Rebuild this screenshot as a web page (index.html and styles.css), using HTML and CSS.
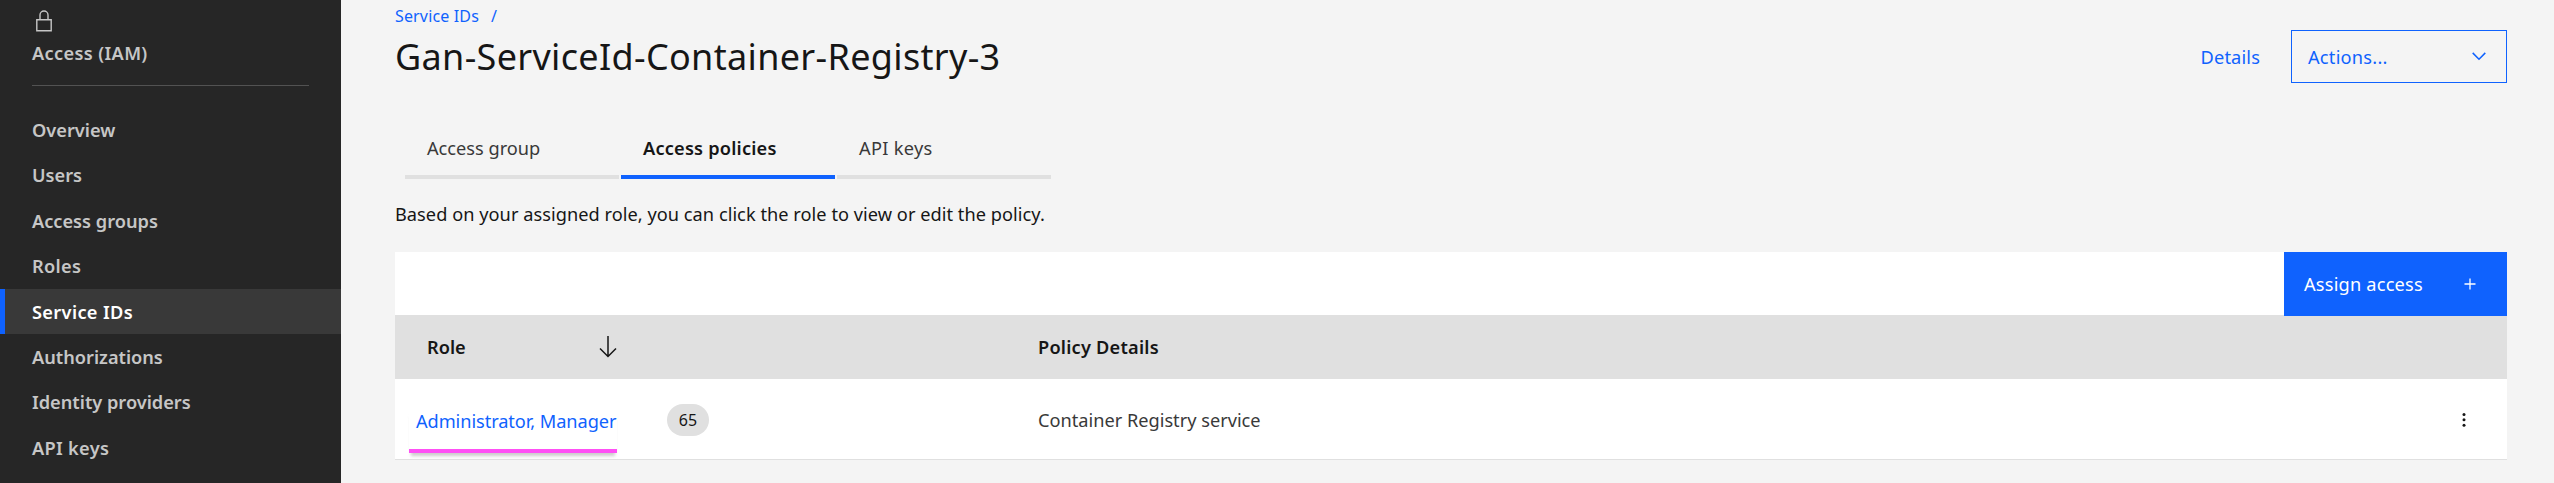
FILE: index.html
```html
<!DOCTYPE html>
<html lang="en">
<head>
<meta charset="utf-8">
<title>Service IDs</title>
<link rel="stylesheet" href="styles.css">
</head>
<body>
<div class="app">
  <aside class="sidebar">
    <div class="sidebar-head">
      <svg class="lock" width="16" height="22" viewBox="0 0 16 22"><path d="M.8 9.800h14.400v11H.8zM4 9.800V5a4 4 0 0 1 8 0v4.800" fill="none" stroke="currentColor" stroke-width="1.400"/></svg>
      <div class="sidebar-title">Access (IAM)</div>
    </div>
    <nav class="nav">
      <a class="nav-item">Overview</a>
      <a class="nav-item">Users</a>
      <a class="nav-item">Access groups</a>
      <a class="nav-item loose">Roles</a>
      <a class="nav-item active">Service IDs</a>
      <a class="nav-item">Authorizations</a>
      <a class="nav-item">Identity providers</a>
      <a class="nav-item loose">API keys</a>
    </nav>
  </aside>
  <main class="main">
    <header class="header">
      <div>
        <div class="breadcrumb"><a>Service IDs</a><span>/</span></div>
        <h1 class="title">Gan-ServiceId-Container-Registry-3</h1>
      </div>
      <div class="header-actions">
        <a class="details">Details</a>
        <button class="actions"><span>Actions...</span><svg width="14" height="9" viewBox="0 0 14 9"><path d="M.7.900 7 7.300 13.300.900" fill="none" stroke="currentColor" stroke-width="1.500"/></svg></button>
      </div>
    </header>
    <div class="tabs">
      <div class="tab">Access group</div>
      <div class="tab selected">Access policies</div>
      <div class="tab loose">API keys</div>
    </div>
    <p class="description">Based on your assigned role, you can click the role to view or edit the policy.</p>
    <section class="table">
      <div class="toolbar">
        <button class="assign"><span>Assign access</span><svg width="12" height="12" viewBox="0 0 12 12"><path d="M6 .5v11M.5 6h11" stroke="currentColor" stroke-width="1.300"/></svg></button>
      </div>
      <div class="row head">
        <div class="role-head"><span>Role</span><svg width="18" height="22" viewBox="0 0 18 22"><path d="M9 0v20M1 12.500l8 8 8-8" fill="none" stroke="currentColor" stroke-width="1.500"/></svg></div>
        <div class="policy-head">Policy Details</div>
      </div>
      <div class="row body">
        <div class="role-cell"><a class="role-link">Administrator, Manager</a><span class="badge">65</span></div>
        <div class="policy-cell">Container Registry service</div>
        <svg class="menu" width="4" height="16" viewBox="0 0 4 16"><circle cx="2" cy="2.500" r="1.500"/><circle cx="2" cy="7.800" r="1.500"/><circle cx="2" cy="13.200" r="1.500"/></svg>
      </div>
    </section>
  </main>
</div>
</body>
</html>
```
FILE: styles.css
```css
* { box-sizing: border-box; }
body {
  margin: 0;
  background: #f4f4f4;
  color: #161616;
  font: 18.200px/24px "Noto Sans", sans-serif;
}
button { font: inherit; border: 0; border-radius: 0; }
svg { display: block; flex: none; }
.app { display: flex; height: 483px; overflow: hidden; white-space: nowrap; }
.loose { letter-spacing: .3px; }

.sidebar { width: 341px; flex: none; background: #262626; color: #c6c6c6; font-weight: 600; }
.sidebar-head { height: 86px; margin: 0 32px; padding-top: 10px; border-bottom: 1px solid #525252; }
.lock { margin-left: 4px; }
.sidebar-title { margin-top: 9px; letter-spacing: .35px; }
.nav { padding-top: 21.400px; }
.nav-item { display: flex; align-items: center; height: 45.400px; padding-left: 32px; }
.nav-item.active { background: #393939; color: #fff; box-shadow: inset 5px 0 #0f62fe; letter-spacing: .35px; }

.main { flex: 1; padding: 0 47px 0 54px; }
.header { display: flex; justify-content: space-between; height: 137px; }
.breadcrumb { display: flex; gap: 12px; padding-top: 4px; color: #0f62fe; font-size: 16px; letter-spacing: .15px; }
.title { margin: 5px 0 0; font-size: 36px; line-height: 48px; font-weight: 400; letter-spacing: .33px; }
.header-actions { display: flex; align-items: center; gap: 31px; height: 53px; margin-top: 30px; color: #0f62fe; }
.details { letter-spacing: .15px; }
.actions { display: flex; align-items: center; justify-content: space-between; width: 216px; height: 53px; padding: 0 20px 0 16px; border: 1px solid #0f62fe; background: none; color: inherit; letter-spacing: .25px; }

.tabs { display: flex; gap: 2px; padding-left: 10px; }
.tab { width: 214px; height: 42px; padding-left: 22px; line-height: 22px; border-bottom: 4px solid #e0e0e0; color: #393939; }
.tab.selected { border-color: #0f62fe; color: #161616; font-weight: 600; letter-spacing: .2px; }
.description { margin: 23px 0 26px; letter-spacing: .04px; }

.table { background: #fff; border-bottom: 1px solid #e0e0e0; }
.toolbar { display: flex; justify-content: flex-end; height: 63px; }
.assign { display: flex; align-items: center; justify-content: space-between; width: 223px; height: 64px; padding: 0 31px 0 20px; background: #0f62fe; color: #fff; position: relative; letter-spacing: .2px; }
.row { display: grid; grid-template-columns: 643px 1fr auto; align-items: center; }
.head { height: 64px; background: #e0e0e0; font-weight: 600; }
.role-head { display: flex; align-items: center; justify-content: space-between; width: 222px; padding-left: 32px; }
.policy-head { letter-spacing: .22px; }
.body { height: 80px; padding: 2px 41px 0 0; }
.role-cell { display: flex; align-items: center; justify-content: space-between; width: 314px; padding-left: 14px; }
.role-link { width: 208px; height: 43px; margin-top: 22px; padding-left: 7px; line-height: 22px; letter-spacing: -.07px; color: #0f62fe; border-bottom: 4px solid #ff50f5; box-shadow: 0 5px 3px -2px #aaa9; }
.badge { width: 42px; height: 32px; border-radius: 16px; background: #e0e0e0; font-size: 16px; line-height: 32px; text-align: center; }
.policy-cell { color: #393939; }
.menu { fill: #161616; }
```
